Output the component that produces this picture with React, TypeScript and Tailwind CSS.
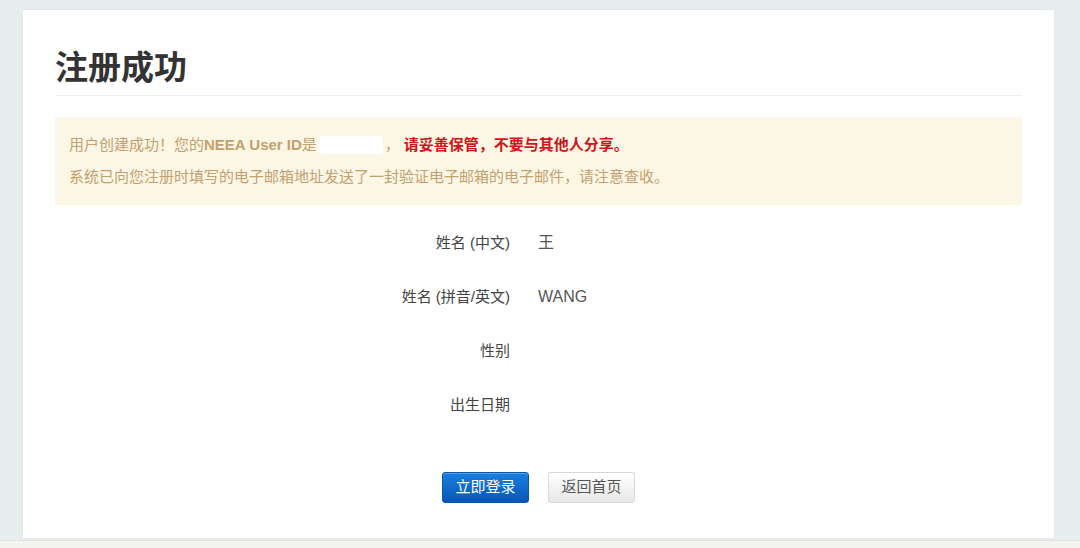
const sans = "font-['Helvetica_Neue',Arial,'Liberation_Sans','Noto_Sans_CJK_SC',sans-serif]";

type Row = { label: string; value: string };

const rows: Row[] = [
  { label: "姓名 (中文)", value: "王" },
  { label: "姓名 (拼音/英文)", value: "WANG" },
  { label: "性别", value: "" },
  { label: "出生日期", value: "" },
];

export default function App() {
  return (
    <div className={`h-[548px] w-[1080px] overflow-hidden bg-[#e7eeed] ${sans}`}>
      <div className="pl-[23px] pt-[10px]">
        <div className="h-[528px] w-[1031px] bg-white px-[32px] shadow-[0_0_3px_rgba(0,0,0,0.06)]">
          <h1 className="flex h-[85px] items-end pb-[11px] text-[33px] font-bold leading-none text-[#333]">
            注册成功
          </h1>
          <div className="h-px bg-[#eeeeee]" />

          <div className="mt-[21px] flex h-[88px] flex-col justify-center gap-[14px] bg-[#fcf7e4] px-[14px] text-[15px] leading-[18px] text-[#c3a070]">
            <p className="flex items-center">
              <span>用户创建成功！您的</span>
              <span className="font-bold">NEEA User ID</span>
              <span>是</span>
              <span className="mx-[2px] inline-block h-[18px] w-[64px] rounded-sm bg-white" />
              <span>，</span>
              <span className="ml-[4px] font-bold text-[#d0131b]">请妥善保管，不要与其他人分享。</span>
            </p>
            <p>系统已向您注册时填写的电子邮箱地址发送了一封验证电子邮箱的电子邮件，请注意查收。</p>
          </div>

          <div className="mt-[11px] flex flex-col">
            {rows.map((r) => (
              <div key={r.label} className="flex h-[54px] items-center text-[15px] text-[#444]">
                <div className="w-[455px] text-right">{r.label}</div>
                <div className="pl-[28px] text-[16px] text-[#555]">{r.value}</div>
              </div>
            ))}
          </div>

          <div className="mt-[40px] flex justify-center gap-[19px] font-['Liberation_Serif','Noto_Sans_CJK_SC',serif] text-[15px]">
            <button className="h-[31px] w-[87px] rounded-[3px] border border-[#0a57a8] bg-gradient-to-b from-[#1a7fe0] to-[#0657b8] text-white shadow-[inset_0_1px_0_rgba(255,255,255,0.25)]">
              立即登录
            </button>
            <button className="h-[31px] w-[87px] rounded-[3px] border border-[#d6d6d6] bg-gradient-to-b from-white to-[#e8e8e8] text-[#555]">
              返回首页
            </button>
          </div>
        </div>
      </div>
      <div className="mt-[2px] h-px bg-[#e2e2df]" />
      <div className="h-[10px] bg-[#f4f4f1]" />
    </div>
  );
}
